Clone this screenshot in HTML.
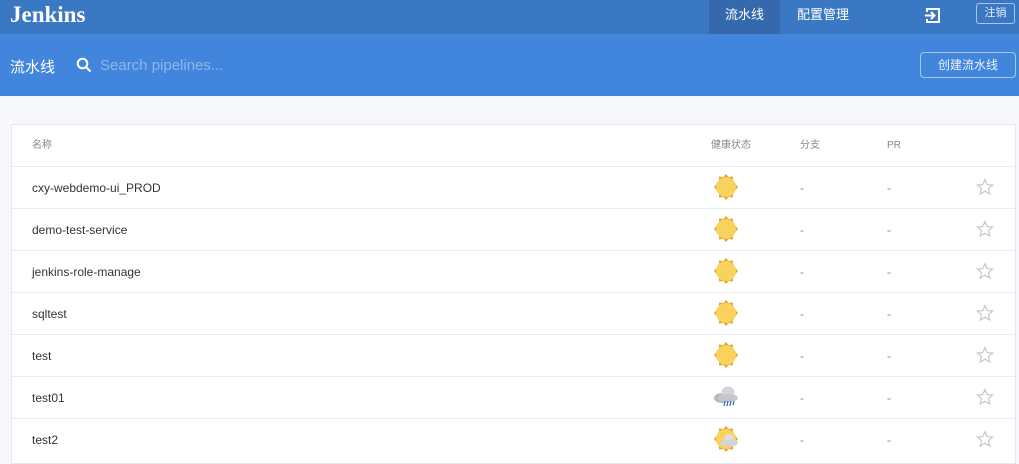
<!DOCTYPE html>
<html><head><meta charset="utf-8">
<style>
*{margin:0;padding:0;box-sizing:border-box}
body{width:1019px;height:461px;overflow:hidden;background:#f7f8fb;font-family:"Liberation Sans","Noto Sans CJK SC",sans-serif;position:relative}
.top{position:absolute;left:0;top:0;width:1019px;height:34px;background:#3b78c4}
.logo{position:absolute;left:10px;top:2px;font-family:"Liberation Serif",serif;font-weight:bold;font-size:23px;color:#fff}
.nav1{position:absolute;left:709px;top:0;width:71px;height:34px;background:#3569ab;color:#fff;font-size:13px;line-height:30px;text-align:center}
.nav2{position:absolute;left:797px;top:0;color:#fff;font-size:13px;line-height:30px}
.logout{position:absolute;left:976px;top:3px;width:39px;height:21px;border:1px solid #a9c5ea;border-radius:3px;color:#e6eefa;font-size:11px;line-height:19px;text-align:center}
.band{position:absolute;left:0;top:34px;width:1019px;height:62px;background:#4285dc}
.title{position:absolute;left:10px;top:22px;color:#fff;font-size:15px}
.search{position:absolute;left:100px;top:23px;color:#8fb6ec;font-size:15px}
.create{position:absolute;left:920px;top:18px;width:96px;height:26px;border:1px solid #a9c8f0;border-radius:4px;color:#eef4fd;font-size:12px;line-height:24px;text-align:center}
.tbl{position:absolute;left:11px;top:124px;width:1005px;height:340px;background:#fff;border:1px solid #e6e7ee}
.row{position:absolute;left:0;width:1003px;height:42px;border-bottom:1px solid #ececf2}
.row span{position:absolute;top:0;line-height:42px;font-size:12px;color:#333}
.row span.b,.row span.p{color:#888}
.h span{color:#888;font-size:10px}
.n{left:20px}.b{left:788px}.p{left:875px}
.icon{position:absolute;left:700px;top:6px}
.star{position:absolute;left:964px;top:11px}
</style></head><body>
<div class="top">
<div class="logo">Jenkins</div>
<div class="nav1">流水线</div>
<div class="nav2">配置管理</div>
<svg style="position:absolute;left:924px;top:7px" width="18" height="17" viewBox="0 0 18 17"><path d="M3 5V2h12v13H3v-3" fill="none" stroke="#fff" stroke-width="2"/><path d="M1 8.5h9M7 5l3.5 3.5L7 12" fill="none" stroke="#fff" stroke-width="2"/></svg>
<div class="logout">注销</div>
</div>
<div class="band">
<div class="title">流水线</div>
<svg style="position:absolute;left:76px;top:23px" width="16" height="16" viewBox="0 0 16 16"><circle cx="6.5" cy="6.5" r="4.8" fill="none" stroke="#fff" stroke-width="2"/><path d="M10 10l4.5 4.5" stroke="#fff" stroke-width="2.2"/></svg>
<div class="search">Search pipelines...</div>
<div class="create">创建流水线</div>
</div>
<div class="tbl">
<div class="row h" style="top:0"><span class="n">名称</span><span style="left:699px">健康状态</span><span class="b">分支</span><span class="p">PR</span></div>
<div class="row" style="top:42px"><span class="n">cxy-webdemo-ui_PROD</span><svg class="icon" width="28" height="28" viewBox="0 0 28 28"><polygon points="14,1 16.5,4 21,3.5 21,8 26,14 21,20 21,24.5 16.5,24 14,27 11.5,24 7,24.5 7,20 2,14 7,8 7,3.5 11.5,4" fill="#e3a834"/><circle cx="14" cy="14" r="10" fill="#f8d25c"/></svg><span class="b">-</span><span class="p">-</span><svg class="star" width="18" height="18" viewBox="0 0 18 18"><polygon points="9,1.5 11.2,6.6 16.6,7 12.5,10.6 13.7,16 9,13.2 4.3,16 5.5,10.6 1.4,7 6.8,6.6" fill="none" stroke="#c8c8cc" stroke-width="1.2"/></svg></div>
<div class="row" style="top:84px"><span class="n">demo-test-service</span><svg class="icon" width="28" height="28" viewBox="0 0 28 28"><polygon points="14,1 16.5,4 21,3.5 21,8 26,14 21,20 21,24.5 16.5,24 14,27 11.5,24 7,24.5 7,20 2,14 7,8 7,3.5 11.5,4" fill="#e3a834"/><circle cx="14" cy="14" r="10" fill="#f8d25c"/></svg><span class="b">-</span><span class="p">-</span><svg class="star" width="18" height="18" viewBox="0 0 18 18"><polygon points="9,1.5 11.2,6.6 16.6,7 12.5,10.6 13.7,16 9,13.2 4.3,16 5.5,10.6 1.4,7 6.8,6.6" fill="none" stroke="#c8c8cc" stroke-width="1.2"/></svg></div>
<div class="row" style="top:126px"><span class="n">jenkins-role-manage</span><svg class="icon" width="28" height="28" viewBox="0 0 28 28"><polygon points="14,1 16.5,4 21,3.5 21,8 26,14 21,20 21,24.5 16.5,24 14,27 11.5,24 7,24.5 7,20 2,14 7,8 7,3.5 11.5,4" fill="#e3a834"/><circle cx="14" cy="14" r="10" fill="#f8d25c"/></svg><span class="b">-</span><span class="p">-</span><svg class="star" width="18" height="18" viewBox="0 0 18 18"><polygon points="9,1.5 11.2,6.6 16.6,7 12.5,10.6 13.7,16 9,13.2 4.3,16 5.5,10.6 1.4,7 6.8,6.6" fill="none" stroke="#c8c8cc" stroke-width="1.2"/></svg></div>
<div class="row" style="top:168px"><span class="n">sqltest</span><svg class="icon" width="28" height="28" viewBox="0 0 28 28"><polygon points="14,1 16.5,4 21,3.5 21,8 26,14 21,20 21,24.5 16.5,24 14,27 11.5,24 7,24.5 7,20 2,14 7,8 7,3.5 11.5,4" fill="#e3a834"/><circle cx="14" cy="14" r="10" fill="#f8d25c"/></svg><span class="b">-</span><span class="p">-</span><svg class="star" width="18" height="18" viewBox="0 0 18 18"><polygon points="9,1.5 11.2,6.6 16.6,7 12.5,10.6 13.7,16 9,13.2 4.3,16 5.5,10.6 1.4,7 6.8,6.6" fill="none" stroke="#c8c8cc" stroke-width="1.2"/></svg></div>
<div class="row" style="top:210px"><span class="n">test</span><svg class="icon" width="28" height="28" viewBox="0 0 28 28"><polygon points="14,1 16.5,4 21,3.5 21,8 26,14 21,20 21,24.5 16.5,24 14,27 11.5,24 7,24.5 7,20 2,14 7,8 7,3.5 11.5,4" fill="#e3a834"/><circle cx="14" cy="14" r="10" fill="#f8d25c"/></svg><span class="b">-</span><span class="p">-</span><svg class="star" width="18" height="18" viewBox="0 0 18 18"><polygon points="9,1.5 11.2,6.6 16.6,7 12.5,10.6 13.7,16 9,13.2 4.3,16 5.5,10.6 1.4,7 6.8,6.6" fill="none" stroke="#c8c8cc" stroke-width="1.2"/></svg></div>
<div class="row" style="top:252px"><span class="n">test01</span><svg class="icon" width="28" height="28" viewBox="0 0 28 28"><ellipse cx="10" cy="15" rx="8" ry="5" fill="#b7b9bd"/><circle cx="16" cy="10" r="6.5" fill="#d3d5d8"/><ellipse cx="16" cy="15" rx="10" ry="4" fill="#c4c6ca"/><path d="M13 18l-1 5M16 18l-1 5M19 18l-1 5M22 18l-1 4" stroke="#3d6fb8" stroke-width="1.3"/></svg><span class="b">-</span><span class="p">-</span><svg class="star" width="18" height="18" viewBox="0 0 18 18"><polygon points="9,1.5 11.2,6.6 16.6,7 12.5,10.6 13.7,16 9,13.2 4.3,16 5.5,10.6 1.4,7 6.8,6.6" fill="none" stroke="#c8c8cc" stroke-width="1.2"/></svg></div>
<div class="row" style="top:294px;border-bottom:none"><span class="n">test2</span><svg class="icon" width="28" height="28" viewBox="0 0 28 28"><polygon points="14,1 16.5,4 21,3.5 21,8 26,14 21,20 21,24.5 16.5,24 14,27 11.5,24 7,24.5 7,20 2,14 7,8 7,3.5 11.5,4" fill="#e3a834"/><circle cx="14" cy="14" r="10" fill="#f8d25c"/><circle cx="17" cy="14" r="5" fill="#dcdde0"/><ellipse cx="17" cy="18" rx="9" ry="3.5" fill="#d3d4d8"/></svg><span class="b">-</span><span class="p">-</span><svg class="star" width="18" height="18" viewBox="0 0 18 18"><polygon points="9,1.5 11.2,6.6 16.6,7 12.5,10.6 13.7,16 9,13.2 4.3,16 5.5,10.6 1.4,7 6.8,6.6" fill="none" stroke="#c8c8cc" stroke-width="1.2"/></svg></div>
</div>
</body></html>
